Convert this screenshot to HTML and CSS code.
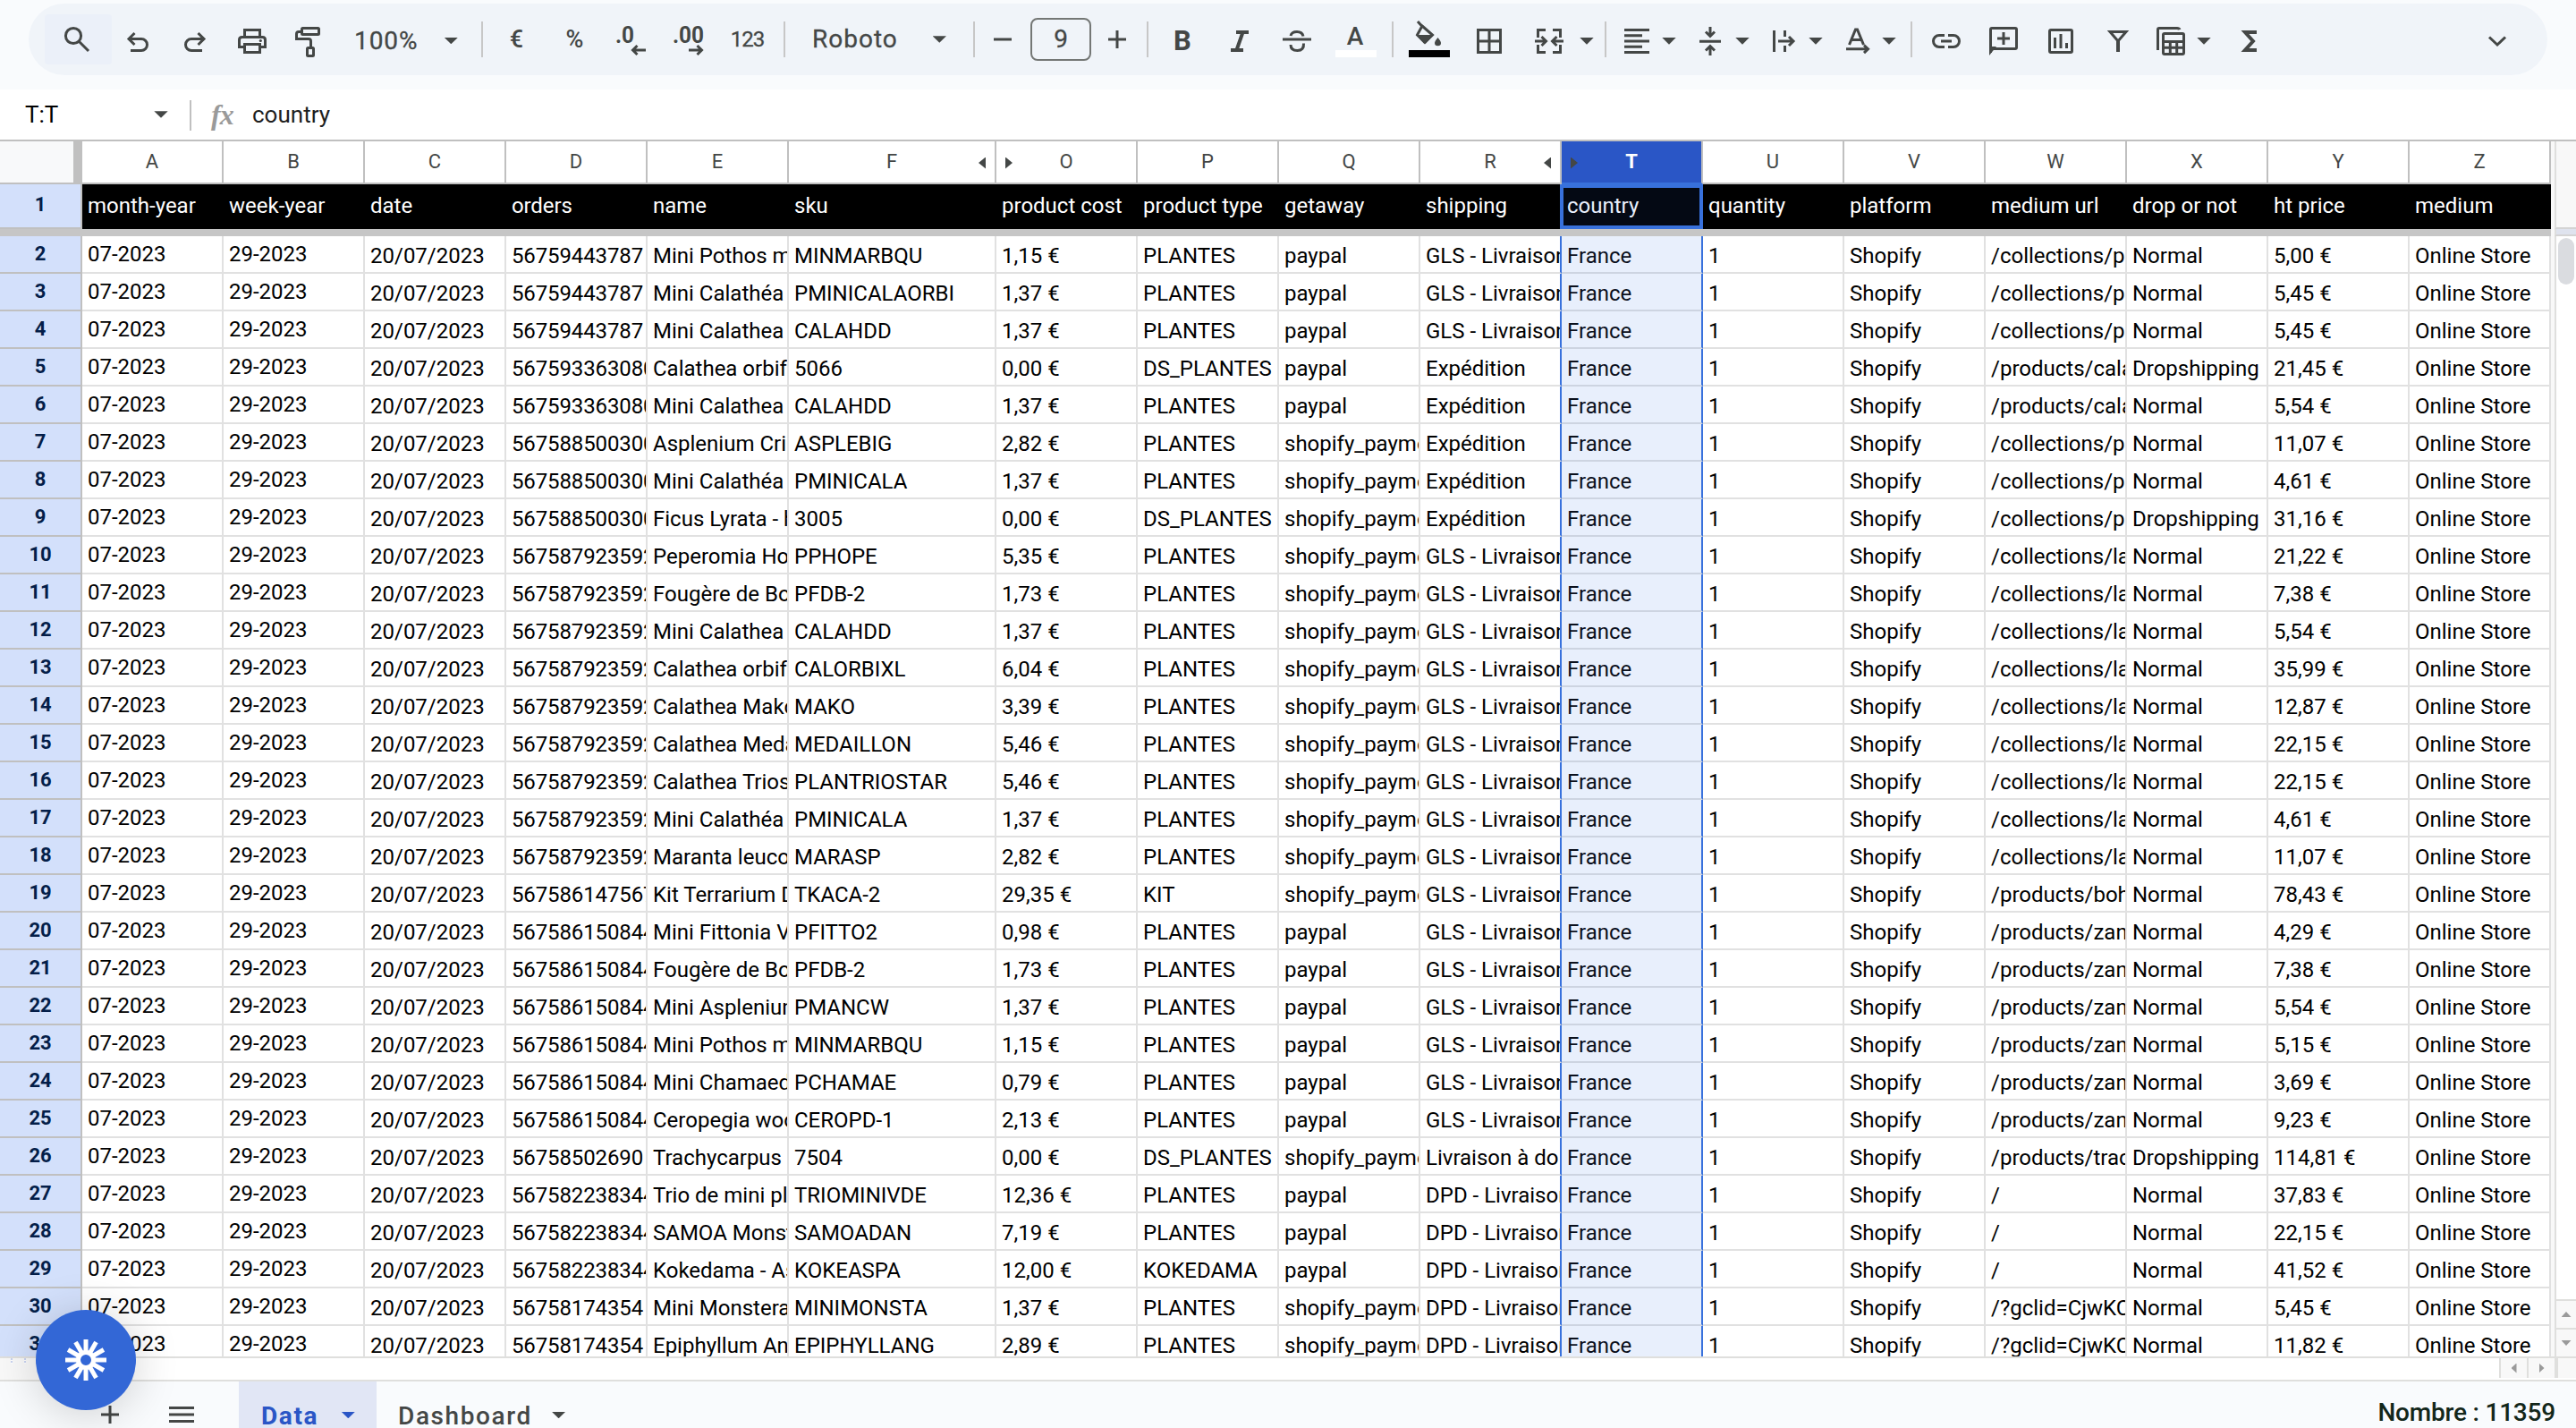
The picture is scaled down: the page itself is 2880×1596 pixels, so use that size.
FILE: index.html
```html
<!DOCTYPE html>
<html lang="fr">
<head>
<meta charset="utf-8">
<title>Data</title>
<link rel="stylesheet" href="styles.css">
</head>
<body>
<div class="app">
  <header class="toolbar-wrap">
    <div class="toolbar">
      <svg class="ico" width="93" viewBox="32 4 93 80"><rect class="hover" x="50" y="16" width="75" height="56" rx="4"/><circle cx="82" cy="40" r="8.6"/><path d="M88 46L99 57"/></svg>
      <svg class="ico" width="57" viewBox="125 4 57 80"><path d="M150.5 37L144 43.5l6.5 6.5M144 43.5H158a6.5 6.5 0 0 1 0 13H146"/></svg>
      <svg class="ico" width="66" viewBox="182 4 66 80"><path d="M221.5 37l6.5 6.5-6.5 6.5M228 43.5H214a6.5 6.5 0 0 0 0 13H226"/></svg>
      <svg class="ico" width="66" viewBox="248 4 66 80"><path d="M273.5 41.5v-8h17v8M273 52.5h-5.5v-8q0-3 3-3h23q3 0 3 3v8H291"/><rect x="273.5" y="49.5" width="17" height="9"/><circle class="solid" cx="291.3" cy="45.5" r="1.6"/></svg>
      <svg class="ico" width="66" viewBox="314 4 66 80"><rect x="337.5" y="31.5" width="19" height="7" rx="1"/><path d="M337 35.5h-3q-2.5 0-2.5 2.5v5.5h13.500q2.5 0 2.5 2.5v7"/><rect x="343.5" y="53.5" width="7" height="9" rx="1"/></svg>
      <div class="dropdown zoom-level"><span>100%</span><i class="caret"></i></div>
      <i class="sep"></i>
      <span class="label euro">€</span>
      <span class="label percent">%</span>
      <svg class="ico" width="68" viewBox="670 4 68 80"><text x="688" y="48" textLength="21" lengthAdjust="spacingAndGlyphs">.0</text><path d="M722 56H708M712.5 51L707.5 56l5 5"/></svg>
      <svg class="ico" width="64" viewBox="738 4 64 80"><text x="752" y="48" textLength="35" lengthAdjust="spacingAndGlyphs">.00</text><path d="M770 56H784M779.5 51L784.5 56l-5 5"/></svg>
      <span class="label digits">123</span>
      <i class="sep"></i>
      <div class="dropdown font-name"><span>Roboto</span><i class="caret"></i></div>
      <i class="sep"></i>
      <svg class="ico" width="62" viewBox="1090 4 62 80"><path d="M1111 44h20"/></svg>
      <span class="font-size">9</span>
      <svg class="ico" width="62" viewBox="1220 4 62 80"><path d="M1239 44h20M1249 34v20"/></svg>
      <i class="sep"></i>
      <span class="label bold">B</span>
      <svg class="ico" width="52" viewBox="1360 4 52 80"><path class="thick" d="M1382 36h14M1376 56h14M1389.5 36L1382.5 56"/></svg>
      <svg class="ico" width="76" viewBox="1412 4 76 80"><path d="M1434 44h32M1457 40.5q-1-5-7-5t-7 4.5M1443 50q0 6.5 7.5 6.5t7-8"/></svg>
      <div class="text-color"><span>A</span><i></i></div>
      <i class="sep"></i>
      <svg class="ico" width="77" viewBox="1558 4 77 80"><path d="M1585 24l5 5.5M1590 29l11.5 10-8.500 8.500-8.500-8.500z"/><path class="solid" d="M1583 39h20l-9 9.500h-2zM1607.500 42q3.500 4 3.500 6a3.500 3.200 0 0 1-7 0q0-2 3.500-6z"/><rect class="ink" x="1575" y="56" width="46" height="8"/></svg>
      <svg class="ico" width="62" viewBox="1635 4 62 80"><path d="M1652.5 33.5h25v25h-25zM1665 33v26M1652 46h26"/></svg>
      <svg class="ico" width="97" viewBox="1697 4 97 80"><path d="M1728 33.5h-8.500V42M1736 33.5h8.500V42M1728 58.5h-8.500V50M1736 58.5h8.500V50M1716 46h12.500M1723.500 41l5 5-5 5M1748 46h-12.500M1740.500 41l-5 5 5 5"/><path class="solid" d="M1766.300 42h15.400l-7.700 7.700z"/></svg>
      <i class="sep"></i>
      <svg class="ico" width="84" viewBox="1796 4 84 80"><path d="M1816 33.5h28M1816 39.8h20M1816 46h28M1816 52.2h20M1816 58.5h28"/><path class="solid" d="M1858.300 42h15.400l-7.700 7.700z"/></svg>
      <svg class="ico" width="84" viewBox="1880 4 84 80"><path d="M1900 46.3h24M1912 30v10M1907 35.5l5 5 5-5M1912 62V52M1907 56.5l5-5 5 5"/><path class="solid" d="M1940.300 42h15.400l-7.700 7.700z"/></svg>
      <svg class="ico" width="84" viewBox="1964 4 84 80"><path d="M1983.5 34v24M1995.5 34v7M1995.5 51v7M1988 46h17M2000 41l5 5-5 5"/><path class="solid" d="M2022.300 42h15.400l-7.700 7.700z"/></svg>
      <svg class="ico" width="88" viewBox="2048 4 88 80"><path d="M2067.5 50l7-17h2l7 17M2070 44.5h11M2064 54.8h24M2084 50.5l4.500 4.300-4.500 4.300"/><path class="solid" d="M2104.300 42h15.400l-7.700 7.700z"/></svg>
      <i class="sep"></i>
      <svg class="ico" width="70" viewBox="2138 4 70 80"><path d="M2174 39.5h-6a6.500 6.500 0 0 0 0 13h6M2178 39.500h6a6.500 6.500 0 0 1 0 13h-6M2170 46h12"/></svg>
      <svg class="ico" width="64" viewBox="2208 4 64 80"><path d="M2225.5 59V33q0-1.500 1.500-1.500h26q1.500 0 1.500 1.500v20q0 1.500-1.500 1.500h-24M2233 43h14M2240 36v14"/><path class="solid" d="M2224 52h8l-8 10z"/></svg>
      <svg class="ico" width="64" viewBox="2272 4 64 80"><rect x="2291.5" y="33.5" width="25" height="25" rx="1.5"/><path d="M2297.5 42v12M2304 38v16M2310.5 48v6"/></svg>
      <svg class="ico" width="64" viewBox="2336 4 64 80"><path d="M2359 35.5h18l-9 10.500z"/><path class="thick" d="M2368 45v13"/></svg>
      <svg class="ico" width="88" viewBox="2400 4 88 80"><path d="M2412.5 56V33q0-1.500 1.500-1.500h20q2.500 0 3 1.500"/><rect x="2418.5" y="37.5" width="23" height="23" rx="1.5"/><path d="M2418 46.5h24M2418 53.3h24M2426.3 46v15M2433.7 46v15"/><path class="solid" d="M2456.300 42h15.400l-7.700 7.700z"/></svg>
      <svg class="ico" width="54" viewBox="2488 4 54 80"><path class="thick" d="M2523 36h-13l9 10-9 10h13"/></svg>
      <svg class="ico last" width="112" viewBox="2736 4 112 80"><path d="M2783 41.5l9 8.500 9-8.500"/></svg>
    </div>
  </header>

  <div class="formula-bar">
    <div class="name-box"><span>T:T</span><i class="caret"></i></div>
    <i class="bar-sep"></i>
    <span class="fx">fx</span>
    <span class="formula">country</span>
  </div>

  <main class="workspace">
    <div class="sheet" id="sheet"></div>
    <aside class="vscroll">
      <div class="vs-head"></div>
      <div class="vs-split"></div>
      <div class="vs-track"><div class="thumb"></div></div>
      <div class="vs-btn"><i class="up"></i></div>
      <div class="vs-btn"><i class="down"></i></div>
    </aside>
  </main>

  <div class="hscroll">
    <div class="grip"><i></i><i></i></div>
    <div class="hs-track"></div>
    <div class="hs-btn"><i class="left"></i></div>
    <div class="hs-btn"><i class="right"></i></div>
    <div class="hs-corner"></div>
  </div>

  <footer class="tabs">
    <svg class="tab-icons" width="267" height="52" viewBox="0 1544 267 52"><path d="M113 1581h20M123 1571v20M189 1573.5h28M189 1581h28M189 1588.5h28"/></svg>
    <div class="tab active"><span>Data</span><i class="caret"></i></div>
    <div class="tab"><span>Dashboard</span><i class="caret"></i></div>
    <div class="count">Nombre : 11359</div>
  </footer>
  <div class="fab"><svg id="burst" width="48" height="48" viewBox="-24 -24 48 48"><circle r="8.5"/></svg></div>
</div>
<script src="sheet.js"></script>
</body>
</html>
```
FILE: styles.css
```css
* { box-sizing: border-box; }
body { margin: 0; background: #fff; font-family: Roboto, "Liberation Sans", sans-serif; color: #444746; }
.app { width: 2880px; height: 1596px; overflow: hidden; display: flex; flex-direction: column; position: relative; }

/* toolbar */
.toolbar-wrap { height: 100px; flex: none; padding: 4px 32px 16px; background: #f9fbfd; }
.toolbar { height: 80px; border-radius: 40px; background: #f0f4f9; display: flex; align-items: center; overflow: hidden; }
.toolbar > * { flex: none; }
.ico { height: 80px; display: block; fill: none; stroke: #444746; stroke-width: 3; }
.ico .thick { stroke-width: 4; }
.ico .solid { fill: #444746; stroke: none; }
.ico .ink { fill: #000; stroke: none; }
.ico .hover { fill: #ebf0f9; stroke: none; }
.ico text { fill: #444746; stroke: none; font-size: 25px; font-weight: 700; }
.ico.last { margin-left: auto; }
.sep { width: 2px; height: 40px; background: #c7c7c7; }
.caret { flex: none; display: block; width: 15.4px; height: 7.7px; background: currentColor; clip-path: polygon(0 0, 100% 0, 50% 100%); }
.dropdown { display: flex; align-items: center; justify-content: space-between; font-size: 28px; line-height: 40px; }
.zoom-level { width: 158px; padding: 3px 26px 0 16px; letter-spacing: 0.9px; -webkit-text-stroke: 0.3px #444746; }
.font-name { width: 210px; padding: 0 30px 0 30px; letter-spacing: 1px; }
.font-name, .font-size { -webkit-text-stroke: 0.3px #444746; }
.label { text-align: center; }
.euro { width: 75px; font-size: 27px; font-weight: 500; }
.percent { width: 55px; font-size: 27px; font-weight: 500; }
.digits { width: 74px; padding-right: 7px; font-size: 24px; letter-spacing: -1px; -webkit-text-stroke: 0.3px #444746; }
.font-size { width: 68px; height: 48px; border: 2px solid #747775; border-radius: 8px; text-align: center; font-size: 28px; line-height: 43px; }
.bold { width: 76px; font-size: 31px; font-weight: 700; padding-top: 2px; }
.text-color { width: 68px; height: 80px; padding: 20px 0 0 5px; }
.text-color span { display: block; width: 44px; height: 32px; text-align: center; font-size: 28px; line-height: 34px; font-weight: 500; }
.text-color i { display: block; width: 46px; height: 8px; background: #fff; }

/* formula bar */
.formula-bar { height: 58px; flex: none; display: flex; align-items: center; border-bottom: 2px solid #c0c0c0; }
.name-box { width: 212px; padding: 0 24.3px 0 28px; display: flex; justify-content: space-between; align-items: center; font-size: 26px; color: #000; }
.name-box .caret { background: #444746; }
.bar-sep { width: 2px; height: 34px; background: #c0c0c0; margin-top: 2px; }
.fx { width: 68px; padding-left: 22px; font: italic 700 32px/40px "Liberation Serif", serif; color: #9a9a9a; letter-spacing: -1px; }
.formula { font-size: 26px; color: #1f1f1f; }

/* grid */
.workspace { height: 1360px; flex: none; display: flex; border-bottom: 2px solid #dfdfdd; }
.sheet { width: 2852px; height: 1358px; overflow: hidden; }
.row { display: grid; grid-template-columns: 92px repeat(5, 158px) 232px repeat(11, 158px); height: 42px; }
.cell { border-right: 2px solid #e1e1e1; border-bottom: 2px solid #e1e1e1; padding: 2px 0 0 6px; font-size: 24px; line-height: 40px; color: #000; white-space: pre; overflow: hidden; }
.cell.raised { padding-top: 0; }
.cell.order { letter-spacing: -0.12px; }
.cell.before-sel { border-right-color: #3871dc; }
.cell.sel { background: #e8effc; border-right-color: #3871dc; border-bottom-color: #cdd4e1; color: #0b101c; }
.num { background: #d3e0fb; border-right: 2px solid #c0c0c0; border-bottom: 2px solid #c0c0c0; text-align: center; font-size: 22px; font-weight: 700; line-height: 39px; color: #041e49; overflow: hidden; }
.letters { height: 48px; }
.letters .letter { border-right: 2px solid #c0c0c0; border-bottom: 2px solid #c0c0c0; text-align: center; font-size: 22px; line-height: 45px; position: relative; }
.letters .corner { background: #f8f9fa; border-right: 10px solid #c0c0c0; border-bottom: 2px solid #c0c0c0; }
.letters .picked { background: #2a56c6; color: #fff; font-weight: 700; border-bottom-color: #3871dc; }
.hid { position: absolute; top: 17.5px; width: 8px; height: 13px; background: #444746; }
.hid.before { right: 10px; clip-path: polygon(100% 0, 100% 100%, 0 50%); }
.hid.after { left: 10px; clip-path: polygon(0 0, 100% 50%, 0 100%); }
.titles { height: 50px; }
.titles .num { line-height: 45px; }
.titles .cell { background: #000; color: #fff; border: 0; padding-top: 0; line-height: 48px; }
.titles .cell.sel { background: #040914; color: #e8effc; margin-left: -2px; padding-left: 4px; line-height: 40px; border: 4px solid #3871dc; }
.freeze { height: 8px; background: #c6c6c6; }

/* scrollbars */
.vscroll { width: 28px; height: 1358px; padding-left: 4px; background: #f8f8f8; display: flex; flex-direction: column; }
.vscroll > * { flex: none; border-left: 2px solid #dfdfdd; }
.vs-head { height: 98px; border-bottom: 2px solid #d4d4d4; }
.vs-split { height: 8px; background: #dfe3ee; border-bottom: 2px solid #d4d4d4; }
.vs-track { height: 1188px; background: #fff; padding: 2px 0 0 2px; }
.thumb { width: 18px; height: 52px; border-radius: 9px; background: #dadce0; }
.vs-btn { height: 32px; border-top: 2px solid #dfdfdd; display: flex; align-items: center; justify-content: center; }
.vs-btn i { width: 11px; height: 6px; background: #9a9a9a; }
.up { clip-path: polygon(50% 0, 100% 100%, 0 100%); }
.down { clip-path: polygon(0 0, 100% 0, 50% 100%); }
.hscroll { height: 26px; flex: none; display: flex; border-bottom: 2px solid #dfdfdd; }
.grip { width: 92px; background: #f8f8f8; display: flex; gap: 13px; padding-left: 12px; }
.grip i { width: 2px; height: 6px; background: repeating-linear-gradient(#c9d3f0 0 2px, #fff 2px 3px); }
.hs-track { flex: 1; }
.hs-btn { width: 31px; height: 22px; background: #f8f8f8; border-left: 2px solid #dfdfdd; display: flex; align-items: center; justify-content: center; }
.hs-btn i { width: 6px; height: 11px; background: #9a9a9a; }
.left { clip-path: polygon(100% 0, 100% 100%, 0 50%); }
.right { clip-path: polygon(0 0, 100% 50%, 0 100%); }
.hs-corner { width: 24px; height: 22px; background: #f8f8f8; border-left: 4px solid #dfdfdd; }

/* sheet tabs */
.tabs { height: 52px; flex: none; display: flex; background: #f9fbfd; }
.tab-icons { fill: none; stroke: #444746; stroke-width: 3; }
.tab { display: flex; align-items: center; padding: 25px 24px 0; font-size: 28px; font-weight: 500; line-height: 28px; letter-spacing: 1.6px; gap: 22px; }
.tab .caret { margin-bottom: 2px; }
.tab.active { width: 154px; background: #e1e6f5; color: #2a56c6; font-weight: 700; justify-content: space-between; }
.count { margin-left: auto; padding: 18px 23px 0 0; font-size: 28px; line-height: 34px; font-weight: 500; letter-spacing: -0.2px; color: #13271a; }

.fab { position: absolute; left: 40px; top: 1464px; width: 112px; height: 112px; border-radius: 50%; background: #3367d6; box-shadow: 0 4px 50px rgba(0, 0, 0, 0.18); display: flex; align-items: center; justify-content: center; }
.fab svg { fill: none; stroke: #fff; stroke-width: 5; }
.tab.active span { margin-left: 1px; }
```
FILE: sheet.js
```js
const letters = ["A", "B", "C", "D", "E", "F", "O", "P", "Q", "R", "T", "U", "V", "W", "X", "Y", "Z"];
const titles = ["month-year", "week-year", "date", "orders", "name", "sku", "product cost", "product type", "getaway", "shipping", "country", "quantity", "platform", "medium url", "drop or not", "ht price", "medium"];

const G = "GLS - Livraison", D = "DPD - Livraison", E = "Expédition";
const S = "shopify_payme", P = "paypal";
// order | name | sku | cost | type | gateway | shipping | url | price
const orders = [
  ["56759443787", "Mini Pothos m", "MINMARBQU", "1,15", "PLANTES", P, G, "/collections/p", "5,00"],
  ["56759443787", "Mini Calathéa", "PMINICALAORBI", "1,37", "PLANTES", P, G, "/collections/p", "5,45"],
  ["56759443787", "Mini Calathea", "CALAHDD", "1,37", "PLANTES", P, G, "/collections/p", "5,45"],
  ["567593363080", "Calathea orbif", "5066", "0,00", "DS_PLANTES", P, E, "/products/cala", "21,45"],
  ["567593363080", "Mini Calathea", "CALAHDD", "1,37", "PLANTES", P, E, "/products/cala", "5,54"],
  ["567588500300", "Asplenium Cri", "ASPLEBIG", "2,82", "PLANTES", S, E, "/collections/p", "11,07"],
  ["567588500300", "Mini Calathéa", "PMINICALA", "1,37", "PLANTES", S, E, "/collections/p", "4,61"],
  ["567588500300", "Ficus Lyrata - h", "3005", "0,00", "DS_PLANTES", S, E, "/collections/p", "31,16"],
  ["567587923592", "Peperomia Ho", "PPHOPE", "5,35", "PLANTES", S, G, "/collections/la", "21,22"],
  ["567587923592", "Fougère de Bo", "PFDB-2", "1,73", "PLANTES", S, G, "/collections/la", "7,38"],
  ["567587923592", "Mini Calathea", "CALAHDD", "1,37", "PLANTES", S, G, "/collections/la", "5,54"],
  ["567587923592", "Calathea orbif", "CALORBIXL", "6,04", "PLANTES", S, G, "/collections/la", "35,99"],
  ["567587923592", "Calathea Mako", "MAKO", "3,39", "PLANTES", S, G, "/collections/la", "12,87"],
  ["567587923592", "Calathea Meda", "MEDAILLON", "5,46", "PLANTES", S, G, "/collections/la", "22,15"],
  ["567587923592", "Calathea Trios", "PLANTRIOSTAR", "5,46", "PLANTES", S, G, "/collections/la", "22,15"],
  ["567587923592", "Mini Calathéa", "PMINICALA", "1,37", "PLANTES", S, G, "/collections/la", "4,61"],
  ["567587923592", "Maranta leuco", "MARASP", "2,82", "PLANTES", S, G, "/collections/la", "11,07"],
  ["567586147567", "Kit Terrarium D", "TKACA-2", "29,35", "KIT", S, G, "/products/boh", "78,43"],
  ["567586150844", "Mini Fittonia V", "PFITTO2", "0,98", "PLANTES", P, G, "/products/zan", "4,29"],
  ["567586150844", "Fougère de Bo", "PFDB-2", "1,73", "PLANTES", P, G, "/products/zan", "7,38"],
  ["567586150844", "Mini Asplenium", "PMANCW", "1,37", "PLANTES", P, G, "/products/zan", "5,54"],
  ["567586150844", "Mini Pothos m", "MINMARBQU", "1,15", "PLANTES", P, G, "/products/zan", "5,15"],
  ["567586150844", "Mini Chamaed", "PCHAMAE", "0,79", "PLANTES", P, G, "/products/zan", "3,69"],
  ["567586150844", "Ceropegia woo", "CEROPD-1", "2,13", "PLANTES", P, G, "/products/zan", "9,23"],
  ["56758502690", "Trachycarpus", "7504", "0,00", "DS_PLANTES", S, "Livraison à do", "/products/trac", "114,81"],
  ["567582238344", "Trio de mini pl", "TRIOMINIVDE", "12,36", "PLANTES", P, D, "/", "37,83"],
  ["567582238344", "SAMOA Monst", "SAMOADAN", "7,19", "PLANTES", P, D, "/", "22,15"],
  ["567582238344", "Kokedama - As", "KOKEASPA", "12,00", "KOKEDAMA", P, D, "/", "41,52"],
  ["56758174354", "Mini Monstera", "MINIMONSTA", "1,37", "PLANTES", S, D, "/?gclid=CjwKC", "5,45"],
  ["56758174354", "Epiphyllum An", "EPIPHYLLANG", "2,89", "PLANTES", S, D, "/?gclid=CjwKC", "11,82"]
];

const T = letters.indexOf("T");
const cells = (values) => values.map((v, i) => {
  const mod = i < 2 ? " raised" : i === 3 ? " order" : i === T - 1 ? " before-sel" : i === T ? " sel" : "";
  return `<div class="cell${mod}">${v}</div>`;
}).join("");

const hidden = { F: "before", O: "after", R: "before", T: "after" };
let html = `<div class="row letters"><div class="corner"></div>` + letters.map((l) =>
  `<div class="letter${l === "T" ? " picked" : ""}">${l}${hidden[l] ? `<i class="hid ${hidden[l]}"></i>` : ""}</div>`).join("") + `</div>`;
html += `<div class="row titles"><div class="num">1</div>${cells(titles)}</div><div class="freeze"></div>`;
orders.forEach(([order, name, sku, cost, type, gateway, shipping, url, price], i) => {
  const drop = type === "DS_PLANTES" ? "Dropshipping" : "Normal";
  html += `<div class="row"><div class="num">${i + 2}</div>` + cells(["07-2023", "29-2023", "20/07/2023", order, name, sku,
    cost + " €", type, gateway, shipping, "France", "1", "Shopify", url, drop, price + " €", "Online Store"]) + `</div>`;
});
document.getElementById("sheet").innerHTML = html;

// twelve rays of the round button's emblem
let rays = "";
for (let a = 0; a < 12; a++) rays += `<path d="M0 -8V-23" transform="rotate(${a * 30})"/>`;
document.getElementById("burst").innerHTML += rays;
```
